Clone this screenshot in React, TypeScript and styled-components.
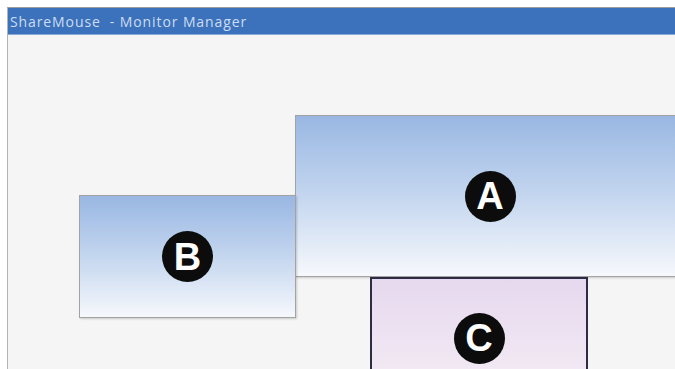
import React from "react";
import styled, { createGlobalStyle } from "styled-components";

const GlobalStyle = createGlobalStyle`
  html, body {
    margin: 0;
    padding: 0;
    width: 675px;
    height: 369px;
    overflow: hidden;
    background: #ffffff;
  }
`;

const Window = styled.div`
  margin: 7px 0 0 7px;
  width: 668px;
  height: 362px;
  border-left: 1px solid #b4b4b4;
  border-top: 1px solid #9c9c9c;
  display: flex;
  flex-direction: column;
  box-sizing: border-box;
  overflow: hidden;
`;

const TitleBar = styled.div`
  height: 26px;
  flex-shrink: 0;
  background: #3b72bb;
  border-bottom: 1px solid #8aa9d6;
  display: flex;
  align-items: center;
  padding-left: 2px;
  font-family: "Open Sans", "Noto Sans", sans-serif;
  font-size: 14px;
  letter-spacing: 0.9px;
  color: #cddcf3;
  white-space: pre;
`;

const Canvas = styled.div`
  position: relative;
  flex: 1;
  background: #f5f5f5;
`;

type Tone = "blue" | "lilac";

// monitors sit on a free canvas, their position is the arrangement itself
const Monitor = styled.div<{ $tone: Tone; $active?: boolean }>`
  position: absolute;
  box-sizing: border-box;
  display: flex;
  align-items: center;
  justify-content: center;
  background: ${(p) =>
    p.$tone === "blue"
      ? "linear-gradient(180deg, #99b7e2 0%, #c4d6ef 50%, #f6f8fc 100%)"
      : "linear-gradient(180deg, #e6d8ee 0%, #f0e7f3 60%, #f7f2f7 100%)"};
  border: ${(p) => (p.$active ? "2px solid #2e2b45" : "1px solid #a3a3a3")};
  box-shadow: ${(p) => (p.$active ? "none" : "1px 1px 2px rgba(0,0,0,0.18)")};
`;

const Badge = styled.div<{ $dx?: number; $dy?: number }>`
  width: 51px;
  height: 51px;
  border-radius: 50%;
  background: #0c0c0c;
  color: #ffffff;
  display: flex;
  align-items: center;
  justify-content: center;
  font-family: "Liberation Sans", Arial, sans-serif;
  font-weight: bold;
  font-size: 38px;
  line-height: 1;
  transform: translate(${(p) => p.$dx ?? 0}px, ${(p) => p.$dy ?? 0}px);
`;

const monitors = [
  { id: "A", tone: "blue" as Tone, left: 287, top: 80, width: 400, height: 162, dx: -5, dy: 0 },
  { id: "B", tone: "blue" as Tone, left: 71, top: 160, width: 217, height: 123, dx: 0, dy: 0 },
  { id: "C", tone: "lilac" as Tone, left: 362, top: 242, width: 218, height: 140, dx: 0, dy: -9, active: true },
];

const App: React.FC = () => {
  return (
    <>
      <GlobalStyle />
      <Window>
        <TitleBar>ShareMouse  - Monitor Manager</TitleBar>
        <Canvas>
          {monitors.map((m) => (
            <Monitor
              key={m.id}
              $tone={m.tone}
              $active={m.active}
              style={{ left: m.left, top: m.top, width: m.width, height: m.height }}
            >
              <Badge $dx={m.dx} $dy={m.dy}>
                {m.id}
              </Badge>
            </Monitor>
          ))}
        </Canvas>
      </Window>
    </>
  );
};

export default App;
